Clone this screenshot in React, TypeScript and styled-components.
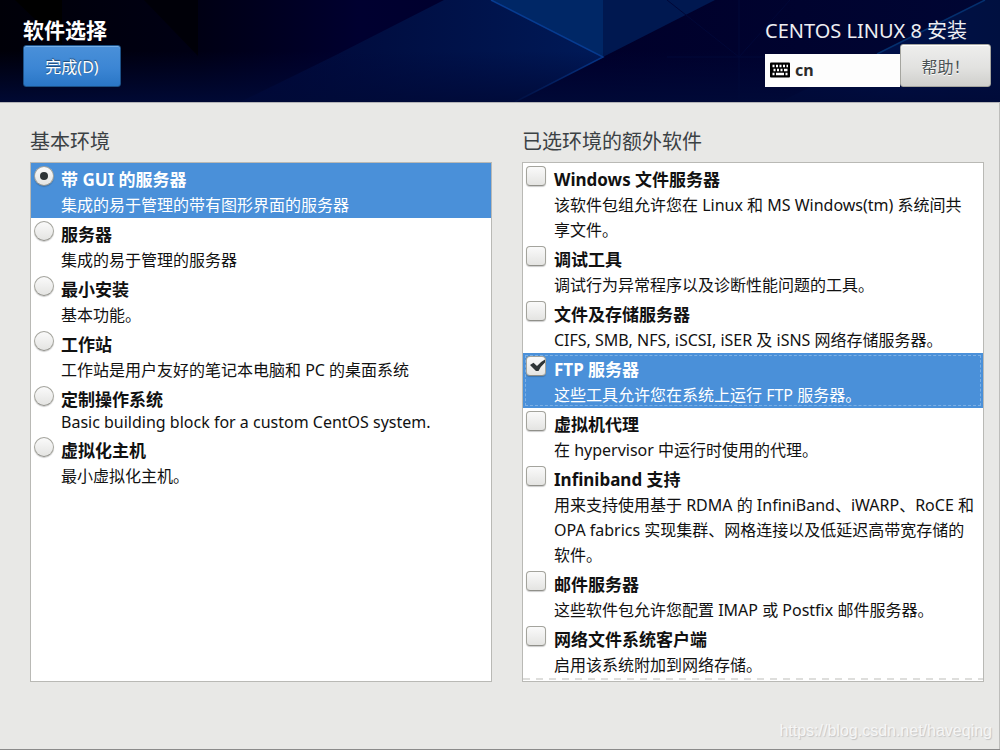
import React, { useState } from "react";
import styled, { createGlobalStyle, css } from "styled-components";

const GlobalStyle = createGlobalStyle`
  * { box-sizing: border-box; }
  body {
    margin: 0;
    background: #e8e8e6;
    font-family: "Noto Sans", "Noto Sans CJK SC", sans-serif;
    font-size: 16px;
    color: #000;
  }
  button { font-family: inherit; font-size: 16px; cursor: pointer; }
`;

const Page = styled.div`
  position: relative;
  min-height: 100vh;
  display: flex;
  flex-direction: column;
  border-bottom: 1px solid #8a8a8a;
`;

const Header = styled.header`
  position: relative;
  isolation: isolate;
  height: 102px;
  display: flex;
  justify-content: space-between;
  padding: 16px 9px 0 23px;
  background: #00000f;
`;

const Backdrop = styled.svg`
  position: absolute;
  inset: 0;
  z-index: -1;
  width: 100%;
  height: 100%;
`;

const TitleBlock = styled.div`
  display: flex;
  flex-direction: column;
  align-items: flex-start;
`;

const Title = styled.h1`
  margin: 0;
  font-size: 21px;
  line-height: 29px;
  font-weight: 700;
  color: #fff;
`;

const DoneButton = styled.button`
  width: 98px;
  height: 42px;
  padding: 0;
  border: 1px solid #1c5187;
  border-radius: 3px;
  color: #fff;
  text-shadow: 0 -1px 1px rgba(0, 0, 0, 0.5);
  background: linear-gradient(#4a90d9, #3c86d4 55%, #2a76c6);
  box-shadow: inset 0 1px #78afe6;
`;

const ProductBlock = styled.div`
  width: 226px;
  display: flex;
  flex-direction: column;
`;

const Product = styled.div`
  height: 28px;
  font-size: 20px;
  line-height: 30px;
  color: #eeeef2;
  white-space: nowrap;
`;

const Controls = styled.div`
  display: flex;
  align-items: flex-end;
`;

const Layout = styled.button`
  flex: 1;
  height: 33px;
  display: flex;
  align-items: center;
  gap: 5px;
  padding: 0 5px 2px;
  border: 0;
  background: #fdfdfd;
  color: #2b2b2b;
  font-weight: 700;
`;

const HelpButton = styled.button`
  width: 91px;
  height: 43px;
  padding: 0;
  border: 1px solid #a5a59f;
  border-radius: 3px;
  color: #4c5254;
  text-shadow: 0 1px #fff;
  background: linear-gradient(#eeeeed, #e2e2e0 55%, #cfcfcc);
  box-shadow: inset 0 1px #fff;
`;

const Main = styled.main`
  flex: 1;
  display: grid;
  grid-template-columns: 1fr 1fr;
  gap: 30px;
  padding: 24px 15px 67px 30px;
  border-top: 1px solid #b4b4b8;
  border-right: 1px solid #bdbdbb;
`;

const Column = styled.section`
  display: flex;
  flex-direction: column;
`;

const Heading = styled.h2`
  margin: 0 0 5px;
  font-size: 20px;
  line-height: 30px;
  font-weight: 400;
  color: #3b4144;
`;

const List = styled.div<{ $more?: boolean }>`
  flex: 1;
  display: flex;
  flex-direction: column;
  border: 1px solid #b9b9b5;
  background: #fff;
  ${(p) =>
    p.$more &&
    css`
      &::after {
        content: "";
        height: 2px;
        margin-top: auto;
        margin-bottom: 1px;
        background: repeating-linear-gradient(90deg, #dededc 0 7px, #fff 7px 13px);
      }
    `}
`;

const Row = styled.label<{ $selected: boolean; $focused: boolean; $gap: number }>`
  position: relative;
  display: grid;
  grid-template-columns: 20px 1fr;
  gap: ${(p) => p.$gap}px;
  padding: 3px 3px 0;
  color: ${(p) => (p.$selected ? "#fff" : "#111")};
  background: ${(p) => (p.$selected ? "#4a90d9" : "transparent")};
  ${(p) =>
    p.$focused &&
    css`
      &::before {
        content: "";
        position: absolute;
        inset: 2px;
        border: 1px dashed #7db0e4;
      }
    `}
`;

const Marker = styled.span`
  position: relative;
  display: grid;
  width: 20px;
  height: 20px;
  > * { grid-area: 1 / 1; }
`;

const Tick = styled.input<{ $round: boolean }>`
  appearance: none;
  width: 20px;
  height: 20px;
  margin: 0;
  border: 1px solid #a4a49d;
  border-bottom-color: #90908a;
  border-radius: ${(p) => (p.$round ? "50%" : "4px")};
  background: linear-gradient(#fafafa, #e4e4e2);
  box-shadow: 0 1px 1px rgba(0, 0, 0, 0.2);
`;

const Mark = styled.svg`
  width: 20px;
  height: 20px;
  pointer-events: none;
`;

const Name = styled.strong`
  display: block;
  font-size: 17px;
  line-height: 27px;
  font-weight: 700;
`;

const Summary = styled.span<{ $latin: boolean }>`
  display: block;
  line-height: ${(p) => (p.$latin ? 18 : 25)}px;
  padding-bottom: ${(p) => (p.$latin ? 3 : 0)}px;
  white-space: pre-line;
`;

const Watermark = styled.a`
  position: absolute;
  right: 8px;
  bottom: 8px;
  font: 16px/20px "Liberation Sans", Arial, sans-serif;
  color: #f6f6f6;
  text-decoration: none;
  text-shadow: 1px 1px 1px #c4c4c4;
`;

type Item = { name: string; summary: string };

const environments: Item[] = [
  { name: "带 GUI 的服务器", summary: "集成的易于管理的带有图形界面的服务器" },
  { name: "服务器", summary: "集成的易于管理的服务器" },
  { name: "最小安装", summary: "基本功能。" },
  { name: "工作站", summary: "工作站是用户友好的笔记本电脑和 PC 的桌面系统" },
  { name: "定制操作系统", summary: "Basic building block for a custom CentOS system." },
  { name: "虚拟化主机", summary: "最小虚拟化主机。" },
];

const addons: Item[] = [
  { name: "Windows 文件服务器", summary: "该软件包组允许您在 Linux 和 MS Windows(tm) 系统间共\n享文件。" },
  { name: "调试工具", summary: "调试行为异常程序以及诊断性能问题的工具。" },
  { name: "文件及存储服务器", summary: "CIFS, SMB, NFS, iSCSI, iSER 及 iSNS 网络存储服务器。" },
  { name: "FTP 服务器", summary: "这些工具允许您在系统上运行 FTP 服务器。" },
  { name: "虚拟机代理", summary: "在 hypervisor 中运行时使用的代理。" },
  { name: "Infiniband 支持", summary: "用来支持使用基于 RDMA 的 InfiniBand、iWARP、RoCE 和\nOPA fabrics 实现集群、网格连接以及低延迟高带宽存储的\n软件。" },
  { name: "邮件服务器", summary: "这些软件包允许您配置 IMAP 或 Postfix 邮件服务器。" },
  { name: "网络文件系统客户端", summary: "启用该系统附加到网络存储。" },
];

const isLatin = (text: string) => /^[\x20-\x7e]+$/.test(text);

function Option(props: { item: Item; type: "radio" | "checkbox"; checked: boolean; onChange: () => void }) {
  const { item, type, checked, onChange } = props;
  return (
    <Row $selected={checked} $focused={checked && type === "checkbox"} $gap={type === "radio" ? 7 : 8}>
      <Marker>
        <Tick
          type={type}
          name={type === "radio" ? "environment" : item.name}
          $round={type === "radio"}
          checked={checked}
          onChange={onChange}
        />
        {checked && (
          <Mark viewBox="0 0 20 20" aria-hidden="true">
            {type === "radio" ? (
              <circle cx="10" cy="10" r="4" fill="#2e3436" />
            ) : (
              <path d="M4 9 7.500 6.800 11 10 Q14 6 19 3.500 V6.500 Q14.500 10.500 12.500 15 H10 Z" fill="#2e3436" />
            )}
          </Mark>
        )}
      </Marker>
      <span>
        <Name>{item.name}</Name>
        <Summary $latin={isLatin(item.summary)}>{item.summary}</Summary>
      </span>
    </Row>
  );
}

function HeaderBackdrop() {
  return (
    <Backdrop viewBox="0 0 1000 102" preserveAspectRatio="none" aria-hidden="true">
      <defs>
        <linearGradient id="base">
          <stop offset="0" stopColor="#000008" />
          <stop offset="0.2" stopColor="#000014" />
          <stop offset="0.36" stopColor="#000030" />
          <stop offset="0.6" stopColor="#00002a" />
          <stop offset="1" stopColor="#000634" />
        </linearGradient>
        <linearGradient id="wedge">
          <stop offset="0" stopColor="#000634" />
          <stop offset="0.4" stopColor="#000e42" />
          <stop offset="1" stopColor="#001a58" />
        </linearGradient>
        <linearGradient id="corner">
          <stop offset="0" stopColor="#000a3a" />
          <stop offset="0.5" stopColor="#001048" />
          <stop offset="1" stopColor="#001040" />
        </linearGradient>
        <linearGradient id="fade" x2="0" y2="1">
          <stop offset="0.5" stopColor="#00083a" stopOpacity="0" />
          <stop offset="1" stopColor="#000a38" stopOpacity="0.9" />
        </linearGradient>
      </defs>
      <rect width="1000" height="102" fill="url(#base)" />
      <path d="M15 0H62V45Z" fill="#000000" />
      <path d="M144 0H198V56Z" fill="#000008" />
      <path d="M240 102 334 56 444 0H491L603 57 515 102Z" fill="url(#wedge)" />
      <path d="M491 0H603V57Z" fill="#002766" />
      <path d="M603 0H715L603 57Z" fill="#001850" />
      <path d="M877 54 985 0H1000V102H780Z" fill="url(#corner)" />
      <path d="M667 0 739 57 790 0M739 0V102M667 57H860" fill="none" stroke="#000838" />
      <path d="M491 0 603 57 515 102" fill="none" stroke="#073c91" strokeWidth="1.500" />
      <path d="M877 54 985 0" fill="none" stroke="#05306e" strokeWidth="1.500" />
      <rect width="1000" height="102" fill="url(#fade)" />
    </Backdrop>
  );
}

function KeyboardIcon() {
  return (
    <svg width="20" height="16" viewBox="0 0 20 16" aria-hidden="true">
      <rect y="0.5" width="20" height="15" rx="1" fill="#000" />
      <path
        d="M2.5 4h2m1.500 0h2m1.500 0h2m1.500 0h2m1.500 0h1.500M3.500 8h2m1.500 0h2m1.500 0h2m1.500 0h3.500M2.500 12h2m1.500 0h8m1.500 0h2"
        fill="none"
        stroke="#fff"
        strokeWidth="2.4"
      />
    </svg>
  );
}

export default function App() {
  const [environment, setEnvironment] = useState(0);
  const [selected, setSelected] = useState<number[]>([3]);

  const toggle = (index: number) =>
    setSelected((now) => (now.includes(index) ? now.filter((i) => i !== index) : [...now, index]));

  return (
    <Page>
      <GlobalStyle />
      <Header>
        <HeaderBackdrop />
        <TitleBlock>
          <Title>软件选择</Title>
          <DoneButton type="button">完成(D)</DoneButton>
        </TitleBlock>
        <ProductBlock>
          <Product>CENTOS LINUX 8 安装</Product>
          <Controls>
            <Layout type="button">
              <KeyboardIcon />
              cn
            </Layout>
            <HelpButton type="button">帮助！</HelpButton>
          </Controls>
        </ProductBlock>
      </Header>
      <Main>
        <Column>
          <Heading>基本环境</Heading>
          <List role="radiogroup" aria-label="基本环境">
            {environments.map((item, i) => (
              <Option key={item.name} item={item} type="radio" checked={environment === i} onChange={() => setEnvironment(i)} />
            ))}
          </List>
        </Column>
        <Column>
          <Heading>已选环境的额外软件</Heading>
          <List $more role="group" aria-label="已选环境的额外软件">
            {addons.map((item, i) => (
              <Option key={item.name} item={item} type="checkbox" checked={selected.includes(i)} onChange={() => toggle(i)} />
            ))}
          </List>
        </Column>
      </Main>
      <Watermark href="https://blog.csdn.net/haveqing">https://blog.csdn.net/haveqing</Watermark>
    </Page>
  );
}
